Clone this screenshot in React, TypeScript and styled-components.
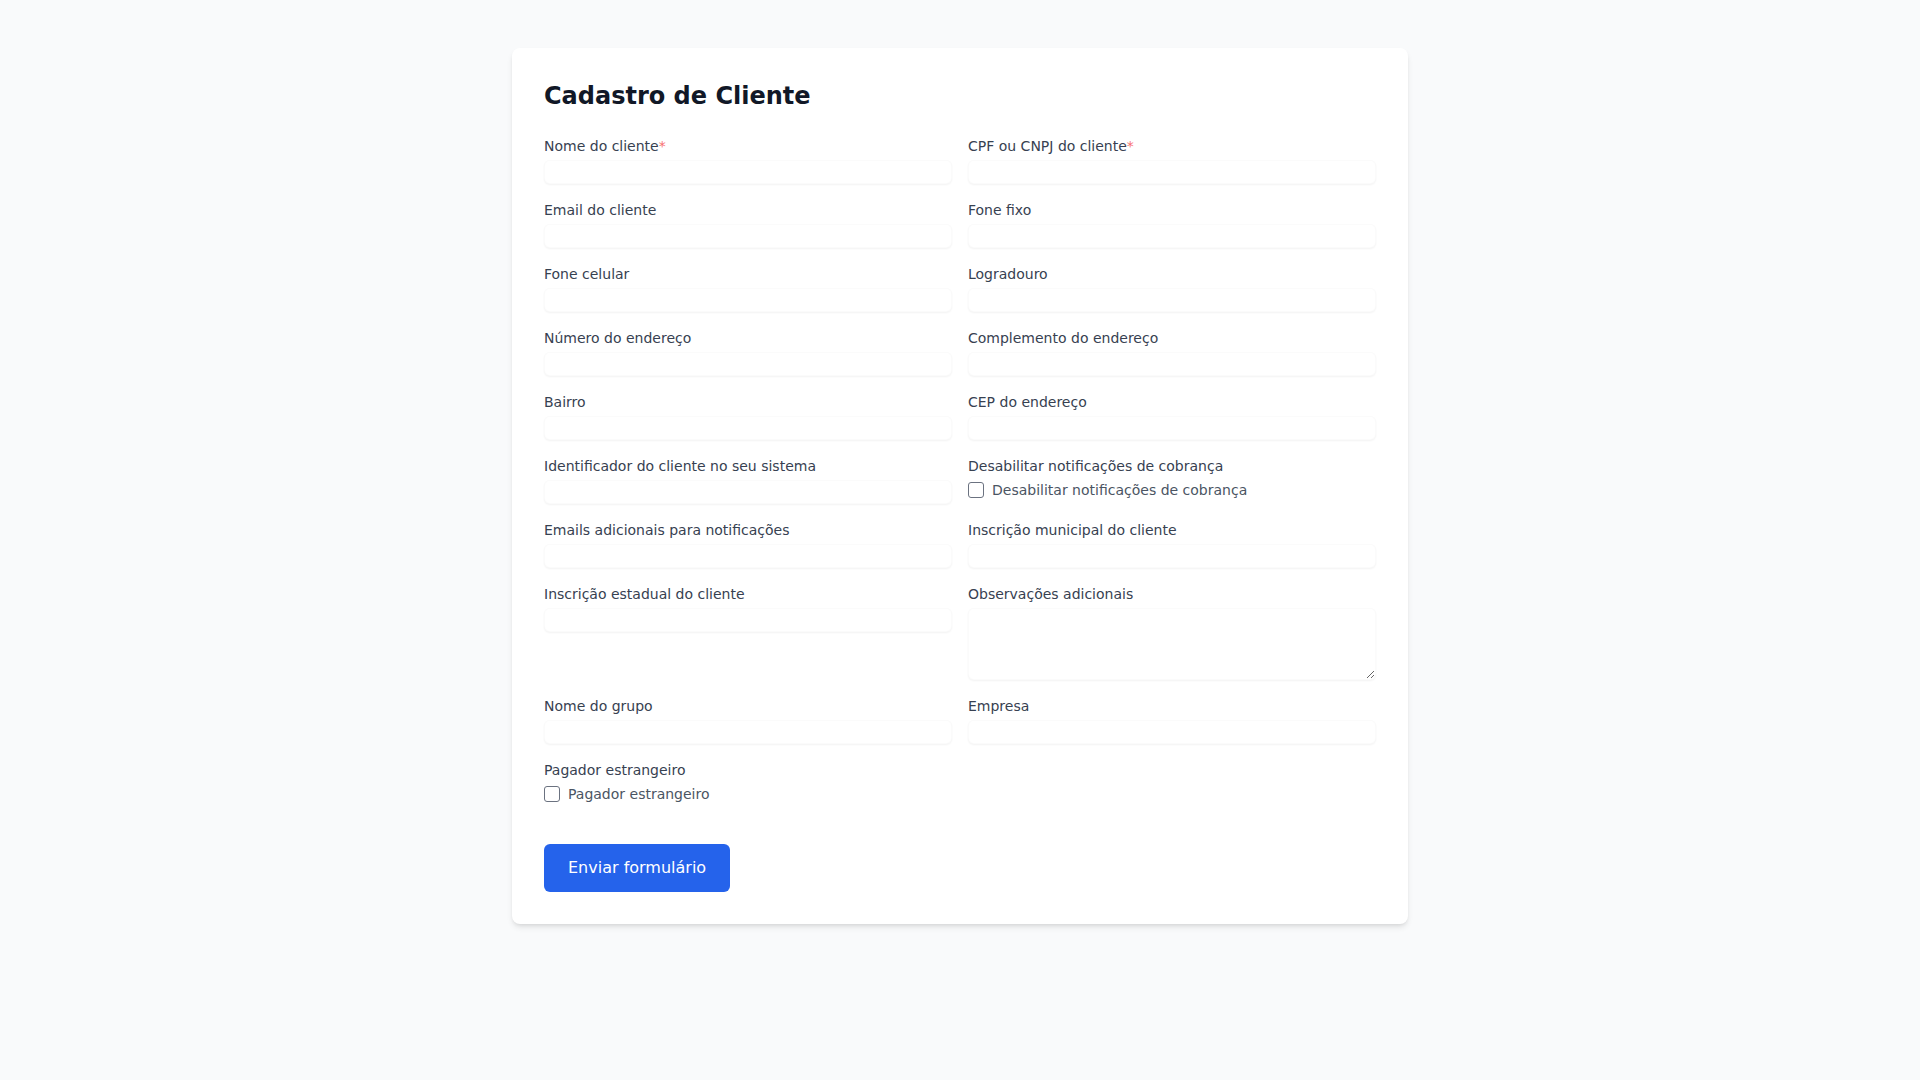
import { createGlobalStyle } from 'styled-components';
import styled from 'styled-components';

const GlobalStyle = createGlobalStyle`
  *, *::before, *::after {
    box-sizing: border-box;
  }

  body {
    margin: 0;
    background: #f9fafb;
    font-family: 'DejaVu Sans', 'Noto Sans', sans-serif;
    color: #111827;
  }
`;

const Page = styled.div`
  min-height: 100vh;
  padding-top: 48px;
  display: flex;
  justify-content: center;
  align-items: flex-start;
`;

const Card = styled.div`
  width: 896px;
  background: #ffffff;
  border-radius: 8px;
  padding: 32px;
  box-shadow: 0 4px 6px -1px rgba(0, 0, 0, 0.1), 0 2px 4px -2px rgba(0, 0, 0, 0.1);
`;

const Title = styled.h1`
  margin: 0 0 24px;
  font-size: 24px;
  line-height: 32px;
  font-weight: 700;
  color: #111827;
`;

const Grid = styled.div`
  display: grid;
  grid-template-columns: 1fr 1fr;
  column-gap: 16px;
  row-gap: 16px;
`;

const Field = styled.div`
  display: flex;
  flex-direction: column;
  min-width: 0;
`;

const Label = styled.label`
  font-size: 14px;
  line-height: 20px;
  color: #374151;
`;

const Required = styled.span`
  color: #f87171;
`;

const Input = styled.input`
  margin-top: 4px;
  height: 24px;
  width: 100%;
  border: 1px solid rgba(0, 0, 0, 0.015);
  border-radius: 6px;
  padding: 0 8px;
  font: inherit;
  font-size: 14px;
  background: #ffffff;
  box-shadow: 0 1px 2px 0 rgba(0, 0, 0, 0.05);
  outline: none;
`;

const TextArea = styled.textarea`
  margin-top: 4px;
  height: 72px;
  width: 100%;
  border: 1px solid rgba(0, 0, 0, 0.015);
  border-radius: 6px;
  padding: 4px 8px;
  font: inherit;
  font-size: 14px;
  background: #ffffff;
  box-shadow: 0 1px 2px 0 rgba(0, 0, 0, 0.05);
  outline: none;
`;

const CheckRow = styled.label`
  margin-top: 4px;
  display: flex;
  align-items: center;
  gap: 8px;
  font-size: 14px;
  line-height: 20px;
  color: #4b5563;
`;

const Box = styled.input`
  appearance: none;
  margin: 0;
  width: 16px;
  height: 16px;
  border: 1px solid #6b7280;
  border-radius: 3px;
  background: #ffffff;
`;

const SubmitButton = styled.button`
  margin-top: 40px;
  height: 48px;
  padding: 0 24px;
  border: none;
  border-radius: 6px;
  background: #2563eb;
  color: #ffffff;
  font: inherit;
  font-size: 16px;
  line-height: 24px;
  cursor: pointer;
`;

type Item =
  | { kind: 'input'; label: string; required?: boolean }
  | { kind: 'check'; label: string }
  | { kind: 'textarea'; label: string };

const items: Item[] = [
  { kind: 'input', label: 'Nome do cliente', required: true },
  { kind: 'input', label: 'CPF ou CNPJ do cliente', required: true },
  { kind: 'input', label: 'Email do cliente' },
  { kind: 'input', label: 'Fone fixo' },
  { kind: 'input', label: 'Fone celular' },
  { kind: 'input', label: 'Logradouro' },
  { kind: 'input', label: 'Número do endereço' },
  { kind: 'input', label: 'Complemento do endereço' },
  { kind: 'input', label: 'Bairro' },
  { kind: 'input', label: 'CEP do endereço' },
  { kind: 'input', label: 'Identificador do cliente no seu sistema' },
  { kind: 'check', label: 'Desabilitar notificações de cobrança' },
  { kind: 'input', label: 'Emails adicionais para notificações' },
  { kind: 'input', label: 'Inscrição municipal do cliente' },
  { kind: 'input', label: 'Inscrição estadual do cliente' },
  { kind: 'textarea', label: 'Observações adicionais' },
  { kind: 'input', label: 'Nome do grupo' },
  { kind: 'input', label: 'Empresa' },
  { kind: 'check', label: 'Pagador estrangeiro' },
];

function FormField({ item }: { item: Item }) {
  return (
    <Field>
      <Label>
        {item.label}
        {item.kind === 'input' && item.required && <Required>*</Required>}
      </Label>
      {item.kind === 'input' && <Input type="text" />}
      {item.kind === 'textarea' && <TextArea rows={3} />}
      {item.kind === 'check' && (
        <CheckRow>
          <Box type="checkbox" />
          {item.label}
        </CheckRow>
      )}
    </Field>
  );
}

export default function App() {
  return (
    <>
      <GlobalStyle />
      <Page>
        <Card>
          <Title>Cadastro de Cliente</Title>
          <form onSubmit={(e) => e.preventDefault()}>
            <Grid>
              {items.map((item) => (
                <FormField key={item.label} item={item} />
              ))}
            </Grid>
            <SubmitButton type="submit">Enviar formulário</SubmitButton>
          </form>
        </Card>
      </Page>
    </>
  );
}
